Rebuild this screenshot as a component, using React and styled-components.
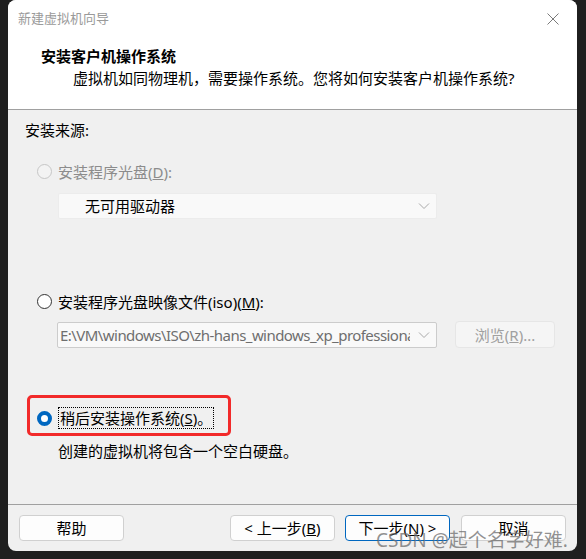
import React from "react";
import styled, {createGlobalStyle} from "styled-components";

const GlobalStyle = createGlobalStyle`
  html, body {
    margin: 0;
    padding: 0;
    background: #1f1f1f;
  }
  body {
    font-family: "Noto Sans", "Noto Sans CJK SC", sans-serif;
    font-size: 15px;
    color: #000;
  }
`;

const Page = styled.div`
  position: relative;
  width: 586px;
  height: 559px;
  overflow: hidden;
`;

const Window = styled.div`
  margin-left: 8px;
  width: 569px;
  height: 551px;
  background: #f0f0f0;
  border-radius: 8px;
  overflow: hidden;
  display: flex;
  flex-direction: column;
`;

const TitleBar = styled.div`
  height: 38px;
  flex: none;
  background: #fff;
  display: flex;
  align-items: center;
  justify-content: space-between;
  padding: 0 18px 0 10px;
`;

const TitleText = styled.div`
  font-size: 13px;
  line-height: 18px;
  color: #9a9a9a;
  margin-top: -2px;
`;

const Header = styled.div`
  background: #fff;
  padding: 8px 0 21px 33px;
  border-bottom: 1px solid #a0a0a0;
`;

const HeaderTitle = styled.div`
  font-weight: 700;
  font-size: 15px;
  line-height: 20px;
`;

const HeaderSub = styled.div`
  margin-top: 2px;
  margin-left: 32px;
  line-height: 20px;
`;

const Body = styled.div`
  flex: 1;
  display: flex;
  flex-direction: column;
  align-items: flex-start;
  padding: 10px 0 0 17px;
`;

const Label = styled.div`
  line-height: 20px;
  margin-top: ${p => p.$top || 0}px;
  margin-left: ${p => p.$left || 0}px;
`;

const RadioRow = styled.div`
  display: flex;
  align-items: center;
  gap: 6px;
  height: 20px;
  margin-top: ${p => p.$top || 0}px;
  margin-left: 12px;
  color: ${p => (p.$disabled ? "#8c8c8c" : "#000")};
`;

const RadioDot = styled.span`
  box-sizing: border-box;
  width: 15px;
  height: 15px;
  border-radius: 50%;
  flex: none;
  border: ${p =>
    p.$checked ? "4px solid #0067c0" : p.$disabled ? "1px solid #c6c6c6" : "1px solid #333"};
  background: ${p => (p.$disabled ? "#f3f3f3" : "#fff")};
`;

const FocusLabel = styled.span`
  border: 1px dotted #000;
  padding: 0 1px;
  line-height: 20px;
`;

const Highlight = styled.div`
  margin-left: 2px;
  margin-top: ${p => p.$top}px;
  border: 3px solid #f22a2a;
  border-radius: 5px;
  padding: 9px 14px 4px 0;
  & > ${RadioRow} {
    margin-left: 7px;
    margin-top: 0;
    height: 22px;
  }
`;

const FieldRow = styled.div`
  display: flex;
  align-items: center;
  gap: 18px;
  margin-top: ${p => p.$top || 0}px;
  margin-left: ${p => p.$left || 33}px;
`;

const Select = styled.div`
  box-sizing: border-box;
  width: ${p => p.$width}px;
  height: 26px;
  display: flex;
  align-items: center;
  background: #f9f9f9;
  border: 1px solid ${p => p.$border};
  border-radius: 2px;
  padding: 0 6px 0 ${p => p.$pad}px;
  color: ${p => p.$color};
  letter-spacing: ${p => p.$spacing || 0}px;
  overflow: hidden;
`;

const SelectText = styled.span`
  flex: 1;
  white-space: nowrap;
  overflow: hidden;
  line-height: 20px;
`;

const Chevron = () => (
  <svg width="12" height="8" viewBox="0 0 12 8" style={{flex: "none", marginLeft: 8}}>
    <path d="M1 1.5 L6 6.5 L11 1.5" fill="none" stroke="#a8a8a8" strokeWidth="1" />
  </svg>
);

const BrowseButton = styled.div`
  box-sizing: border-box;
  width: 100px;
  height: 27px;
  display: flex;
  align-items: center;
  justify-content: center;
  background: #f5f5f5;
  border: 1px solid #e6e6e6;
  border-radius: 4px;
  color: #a0a0a0;
  line-height: 20px;
`;

const Footer = styled.div`
  border-top: 1px solid #a0a0a0;
  height: 47px;
  flex: none;
  box-sizing: border-box;
  display: flex;
  align-items: center;
  padding: 0 4px 0 11px;
`;

const Button = styled.div`
  box-sizing: border-box;
  width: 105px;
  height: 26px;
  display: flex;
  align-items: center;
  justify-content: center;
  background: #fdfdfd;
  border: 1px solid ${p => (p.$focused ? "#0067c0" : "#d0d0d0")};
  border-radius: 4px;
  margin-left: ${p => p.$left || 0}px;
  line-height: 20px;
`;

const Watermark = styled.div`
  position: absolute;
  left: 376px;
  top: 527px;
  font-size: 19px;
  line-height: 26px;
  color: rgba(110, 110, 110, 0.75);
  white-space: nowrap;
  pointer-events: none;
`;

const CloseIcon = () => (
  <svg width="12" height="12" viewBox="0 0 12 12">
    <path d="M0.5 0.5 L11.5 11.5 M11.5 0.5 L0.5 11.5" stroke="#7a7a7a" strokeWidth="1" />
  </svg>
);

export default function App() {
  return (
    <Page>
      <GlobalStyle />
      <Window>
        <TitleBar>
          <TitleText>新建虚拟机向导</TitleText>
          <CloseIcon />
        </TitleBar>
        <Header>
          <HeaderTitle>安装客户机操作系统</HeaderTitle>
          <HeaderSub>虚拟机如同物理机，需要操作系统。您将如何安装客户机操作系统?</HeaderSub>
        </Header>
        <Body>
          <Label>安装来源:</Label>
          <RadioRow $top={21} $disabled>
            <RadioDot $disabled />
            <span>安装程序光盘(<u>D</u>):</span>
          </RadioRow>
          <FieldRow $top={12}>
            <Select $width={379} $border="#ececec" $pad={26} $color="#000">
              <SelectText>无可用驱动器</SelectText>
              <Chevron />
            </Select>
          </FieldRow>
          <RadioRow $top={72}>
            <RadioDot />
            <span>安装程序光盘映像文件(iso)(<u>M</u>):</span>
          </RadioRow>
          <FieldRow $top={10} $left={32}>
            <Select $width={380} $border="#cccccc" $pad={2} $color="#6e6e6e" $spacing={-0.55}>
              <SelectText>E:\VM\windows\ISO\zh-hans_windows_xp_professional_with_service_pack_3_x86_cd_x14-80404.iso</SelectText>
              <Chevron />
            </Select>
            <BrowseButton>浏览(<u>R</u>)...</BrowseButton>
          </FieldRow>
          <Highlight $top={47}>
            <RadioRow>
              <RadioDot $checked />
              <FocusLabel>稍后安装操作系统(<u>S</u>)。</FocusLabel>
            </RadioRow>
          </Highlight>
          <Label $top={5} $left={33}>创建的虚拟机将包含一个空白硬盘。</Label>
        </Body>
        <Footer>
          <Button>帮助</Button>
          <Button $left={106}>&lt; 上一步(<u>B</u>)</Button>
          <Button $left={10} $focused>下一步(<u>N</u>) &gt;</Button>
          <Button $left={11}>取消</Button>
        </Footer>
      </Window>
      <Watermark>CSDN @起个名字好难.</Watermark>
    </Page>
  );
}
